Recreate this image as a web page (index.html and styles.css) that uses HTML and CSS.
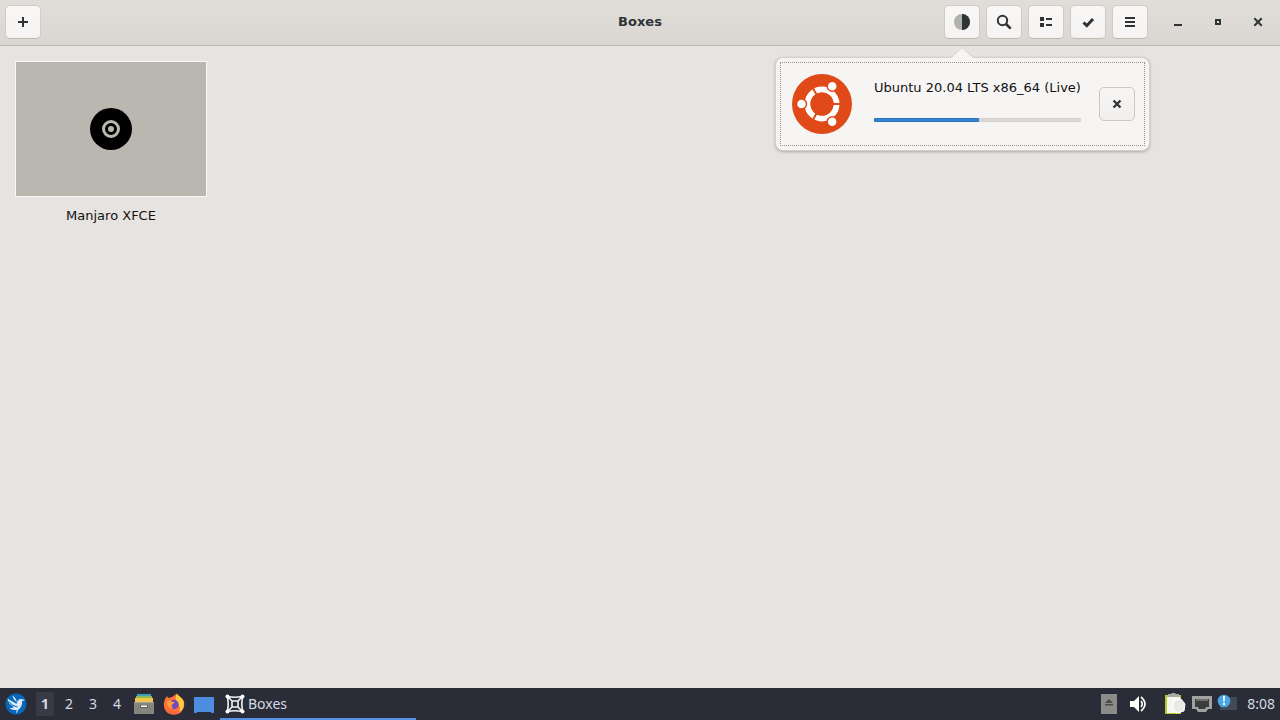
FILE: index.html
```html
<!DOCTYPE html>
<html lang="en">
<head>
<meta charset="utf-8">
<title>Boxes</title>
<link rel="stylesheet" href="styles.css">
</head>
<body>
<header class="header">
  <div class="header-start">
    <button class="btn" aria-label="New box"><svg width="16" height="16" viewBox="0 0 16 16"><path d="M8 3v10M3 8h10" stroke="currentColor" stroke-width="2" fill="none"/></svg></button>
  </div>
  <h1 class="title">Boxes</h1>
  <div class="header-end">
    <div class="downloads">
      <button class="btn" aria-label="Downloads"><svg width="16" height="16" viewBox="0 0 16 16"><circle cx="8" cy="8" r="8" fill="#b1b1af"/><path d="M8 0a8 8 0 0 1 0 16z" fill="currentColor"/></svg></button>
      <section class="popover" aria-label="Downloads">
        <svg class="arrow" width="22" height="11" viewBox="0 0 22 11"><path d="M0 10.500L11 .5l11 10V11H0z" fill="#f6f5f4"/><path d="M0 10.500L11 .5l11 10" fill="none" stroke="#d3cfca"/></svg>
        <div class="download">
          <svg width="60" height="60" viewBox="0 0 60 60">
            <circle cx="30" cy="30" r="30" fill="#e04a18"/>
            <circle cx="30" cy="30" r="14.500" fill="none" stroke="#fff" stroke-width="6"/>
            <path d="M30 30h19M30 30l-9.500 -16.500M30 30l-9.500 16.500" stroke="#e04a18" stroke-width="2"/>
            <circle cx="30" cy="30" r="11.500" fill="#e04a18"/>
            <g fill="#fff" stroke="#e04a18" stroke-width="1.500"><circle cx="9.500" cy="30" r="5"/><circle cx="40.200" cy="12.300" r="5"/><circle cx="40.200" cy="47.700" r="5"/></g>
          </svg>
          <div class="download-info">
            <span id="dl-name">Ubuntu 20.04 LTS x86_64 (Live)</span>
            <div class="bar" role="progressbar" aria-labelledby="dl-name" aria-valuenow="50" aria-valuemin="0" aria-valuemax="100"><div class="bar-fill" style="width:51%"></div></div>
          </div>
          <button class="btn btn-cancel" aria-label="Cancel download"><svg width="16" height="16" viewBox="0 0 16 16"><path d="M4.500 4.500l7 7M11.500 4.500l-7 7" stroke="currentColor" stroke-width="2.300"/></svg></button>
        </div>
      </section>
    </div>
    <button class="btn" aria-label="Search"><svg width="16" height="16" viewBox="0 0 16 16"><circle cx="6.500" cy="6.500" r="4.700" fill="none" stroke="currentColor" stroke-width="2"/><path d="M10 10l4.700 4.700" stroke="currentColor" stroke-width="2.600"/></svg></button>
    <button class="btn" aria-label="List view"><svg width="16" height="16" viewBox="0 0 16 16"><path d="M2 3h4v4H2zM2 9h4v4H2zM8 4h6v2H8zM8 10h6v2H8z" fill="currentColor"/></svg></button>
    <button class="btn" aria-label="Select"><svg width="16" height="16" viewBox="0 0 16 16"><path d="M3.500 8.500l3.300 3.200L13 5" fill="none" stroke="currentColor" stroke-width="3"/></svg></button>
    <button class="btn" aria-label="Menu"><svg width="16" height="16" viewBox="0 0 16 16"><path d="M3 4h10M3 8h10M3 12h10" stroke="currentColor" stroke-width="2"/></svg></button>
    <div class="window-controls">
      <button class="win" aria-label="Minimize"><svg width="16" height="16" viewBox="0 0 16 16"><path d="M4 10h8v2H4z" fill="currentColor"/></svg></button>
      <button class="win" aria-label="Maximize"><svg width="16" height="16" viewBox="0 0 16 16"><path d="M6 6h4v4H6z" fill="none" stroke="currentColor" stroke-width="2"/></svg></button>
      <button class="win" aria-label="Close"><svg width="16" height="16" viewBox="0 0 16 16"><path d="M4.300 4.300l7.400 7.400M11.700 4.300l-7.400 7.400" stroke="currentColor" stroke-width="2"/></svg></button>
    </div>
  </div>
</header>
<main class="boxes">
  <figure class="box">
    <div class="thumb"><svg width="42" height="42" viewBox="0 0 42 42"><circle cx="21" cy="21" r="21"/><circle cx="21" cy="21" r="7.500" fill="none" stroke="#bab7b1" stroke-width="3"/><circle cx="21" cy="21" r="3" fill="#bab7b1"/></svg></div>
    <figcaption>Manjaro XFCE</figcaption>
  </figure>
</main>
<footer class="panel">
  <button class="launcher menu" aria-label="Start menu"><svg width="22" height="22" viewBox="0 0 22 22"><circle cx="11" cy="11" r="10.500" fill="#0867b8"/><path d="M2.500 5.500C5 7.500 8 8 11.500 11c.3-3 2-5 5-5l3.500 1-3 1.200c.5 4-1.500 7-4 8.800l-1.500 3.500c-.5-1.500-.3-2.500.3-3.700-3 .6-5.300 0-7.300-2 2 .3 3.500 0 4.500-.8C5.500 12.500 3 9.500 2.500 5.500zM7.500 2.500c2 1.500 4 3.500 4.300 6.500C9.500 7.500 7.800 5.500 7.500 2.500z" fill="#d9ecf8"/><path d="M4 8.500c2.500 3.500 5 4.500 8.500 5.500" fill="none" stroke="#0867b8"/></svg></button>
  <nav class="workspaces" aria-label="Workspaces">
    <button class="ws ws-on">1</button><button class="ws">2</button><button class="ws">3</button><button class="ws">4</button>
  </nav>
  <div class="launchers">
    <button class="launcher" aria-label="File manager"><svg width="22" height="22" viewBox="0 0 22 22"><path d="M4 1h14v5H4z" fill="#3c9fb4"/><path d="M3 3h16v5H3z" fill="#8dbd52"/><path d="M2 5h18v5H2z" fill="#efc34e"/><path d="M1 9h20v12H1z" fill="#85857f"/><path d="M1 9h20v1H1z" fill="#a1a19c"/><rect x="7" y="12" width="8" height="3" rx="1" fill="#5f605d"/><path d="M8 12.500h6v1.500H8z" fill="#fff"/></svg></button>
    <button class="launcher" aria-label="Firefox"><svg width="22" height="22" viewBox="0 0 22 22"><path d="M2 6l2-3 1 2 4-1 5-3.500c0 2 5.500 4 7 8 1.500 7-3.500 13-10 13S.5 17 1 11c0-2 .5-3.500 1-5z" fill="#ff7139"/><path d="M14 .5c0 2 5.500 4 6.500 8 1.500 6-2 11-6 12.500 4-5 2.500-9-1-11-1.500-3-1-6.500.5-9.500z" fill="#ffcc3e"/><path d="M1 13c1 6 5 8.500 10 8.500 3.500 0 6-1 8-4-7 3-14 1-18-4.500z" fill="#f96a42"/><circle cx="11" cy="11.500" r="4.700" fill="#7249bd"/><path d="M4 8c2-1 3.500-.5 4.500.5l3 .5c-.3 1.700-2 1.800-2.500 3-1 1.500.5 3 2 3-4 1.500-7.500-2-7-7z" fill="#ff9a3d"/></svg></button>
    <button class="launcher" aria-label="Show desktop"><svg width="22" height="22" viewBox="0 0 22 22"><path d="M1 4h20v16h-3v-1H4v1H1z" fill="#4d8de0"/></svg></button>
  </div>
  <button class="task"><svg width="20" height="20" viewBox="0 0 20 20"><g fill="none" stroke="#f2f2f2" stroke-width="1.600"><path d="M2.500 2.500Q10 4 17.500 2.500Q16 10 17.500 17.500Q10 16 2.500 17.500Q4 10 2.500 2.500zM7 7h6v6H7zM3 3l4 4M17 3l-4 4M3 17l4-4M17 17l-4-4"/></g><g fill="#fff"><circle cx="2.500" cy="2.500" r="2"/><circle cx="17.500" cy="2.500" r="2"/><circle cx="2.500" cy="17.500" r="2"/><circle cx="17.500" cy="17.500" r="2"/></g></svg><span>Boxes</span></button>
  <div class="tray">
    <button class="launcher" aria-label="Removable media"><svg width="22" height="22" viewBox="0 0 22 22"><path d="M3 1h16v20H3z" fill="#8b8b89"/><path d="M11 6l4 4H7zM7 11h8v1.500H7z" fill="#4a4b4b"/></svg></button>
    <button class="launcher volume" aria-label="Volume"><svg width="22" height="22" viewBox="0 0 22 22"><path d="M3 8h4l5-5v16l-5-5H3z" fill="#fff"/><path d="M14 8q2.500 3 0 6M14 4q8 7 0 14" fill="none" stroke="#fff" stroke-width="1.700"/></svg></button>
    <button class="launcher clipboard" aria-label="Clipboard"><svg width="22" height="22" viewBox="0 0 22 22"><path d="M1 2h16v19H1z" fill="#b8c72f"/><path d="M3 4h13l1 16H3z" fill="#f6f6ef"/><path d="M4 1h3l1-1h3l1 1h3v3H4z" fill="#a8a9a5"/><path d="M10 8l7-2 4 5-1 7-8 2-3-5z" fill="#e9e9e5" stroke="#fff"/></svg></button>
    <button class="launcher network" aria-label="Network"><svg width="22" height="22" viewBox="0 0 22 22"><path d="M1 3h20v13h-4l-2 3H7l-2-3H1z" fill="#a2a3a0"/><path d="M4 6h14v8h-3l-1 2H8l-1-2H4z" fill="#3b3c3c"/><path d="M6 6v2M8 6v2M10 6v2M12 6v2M14 6v2M16 6v2" stroke="#a2a3a0" stroke-width="1"/></svg></button>
    <button class="launcher notify" aria-label="Notifications"><svg width="22" height="22" viewBox="0 0 22 22"><path d="M3 4h17v13H3z" fill="#424a59"/><circle cx="7" cy="8" r="6.300" fill="#4aa7e4"/><path d="M6 3h2l-.4 6H6.400zM6 10h2v2H6z" fill="#fff"/></svg></button>
    <time class="clock">8:08</time>
  </div>
</footer>
</body>
</html>
```
FILE: styles.css
```css
* { box-sizing: border-box; }
body {
  margin: 0;
  min-height: 100vh;
  display: flex;
  flex-direction: column;
  background: #e7e3e0;
  color: #111;
  font: 13px/16px "DejaVu Sans", sans-serif;
}
button { font: inherit; color: inherit; border: 0; padding: 0; background: none; }
svg { display: block; flex: none; }

.header {
  display: grid;
  grid-template-columns: 1fr auto 1fr;
  align-items: start;
  padding: 5px;
  height: 46px;
  color: #2e3436;
  background: linear-gradient(#e1deda, #dad6d2);
  border-bottom: 1px solid #bfb8b1;
}
.header-end { display: flex; justify-content: flex-end; gap: 6px; }
.title { margin: 0; font-size: 13px; line-height: 34px; font-weight: bold; }
.btn {
  width: 36px;
  height: 34px;
  display: grid;
  place-items: center;
  border: 1px solid #d0cbc6;
  border-bottom-color: #c1bab3;
  border-radius: 5px;
  background: linear-gradient(#f9f8f7, #f4f3f1);
}
.window-controls { display: flex; gap: 12px; margin: 0 3px 0 10px; }
.win { width: 28px; height: 34px; display: grid; place-items: center; }

.downloads { position: relative; }
.popover {
  position: absolute;
  z-index: 1;
  top: 52px;
  left: -169px;
  padding: 4px;
  background: #f6f5f4;
  border: 1px solid #d3cfca;
  border-radius: 8px;
  box-shadow: 0 1px 3px rgba(0, 0, 0, .25);
  color: #111;
}
.arrow { position: absolute; top: -11px; left: 175px; }
.download {
  display: flex;
  align-items: center;
  padding: 11px 9px 11px 11px;
  border: 1px dotted #92928f;
}
.download-info {
  display: flex;
  flex-direction: column;
  gap: 22px;
  margin: 0 18px 6px 22px;
  white-space: nowrap;
}
.bar { height: 4px; background: #dad8d5; border: 1px solid #d2cfcb; border-radius: 1px; }
.bar-fill { height: 4px; margin: -1px; background: #3584d9; border: 1px solid #2770bd; border-radius: 1px; }
.btn-cancel { border-color: #cdc7c2; background: linear-gradient(#f7f6f5, #f0efed); color: #2e3436; }

.boxes { flex: 1; display: flex; flex-wrap: wrap; align-content: start; padding: 15px; }
.box { margin: 0; text-align: center; }
.thumb {
  width: 192px;
  height: 136px;
  display: grid;
  place-items: center;
  background: #bab7b1;
  border: 1px solid #faf9f8;
  margin-bottom: 11px;
}

.panel {
  display: flex;
  align-items: center;
  height: 32px;
  padding: 0 5px;
  background: #2a2d37;
  color: #d3dae3;
  font: 14px/20px "Noto Sans", sans-serif;
}
.workspaces { display: flex; gap: 6px; margin-left: 9px; }
.ws { width: 18px; height: 24px; border-radius: 2px; }
.ws-on { background: #383b45; font-weight: bold; }
.launchers { display: flex; gap: 8px; margin: 0 5px 0 7px; }
.task {
  display: flex;
  align-items: center;
  gap: 3px;
  width: 196px;
  height: 30px;
  margin-top: auto;
  padding: 0 5px;
  border-bottom: 2px solid #5294e2;
}
.tray { display: flex; align-items: center; margin-left: auto; }
.volume { margin-left: 7px; }
.clipboard { margin-left: 15px; }
.network { margin-left: 5px; }
.notify { margin-left: 4px; }
.clock { margin-left: 8px; }
```
